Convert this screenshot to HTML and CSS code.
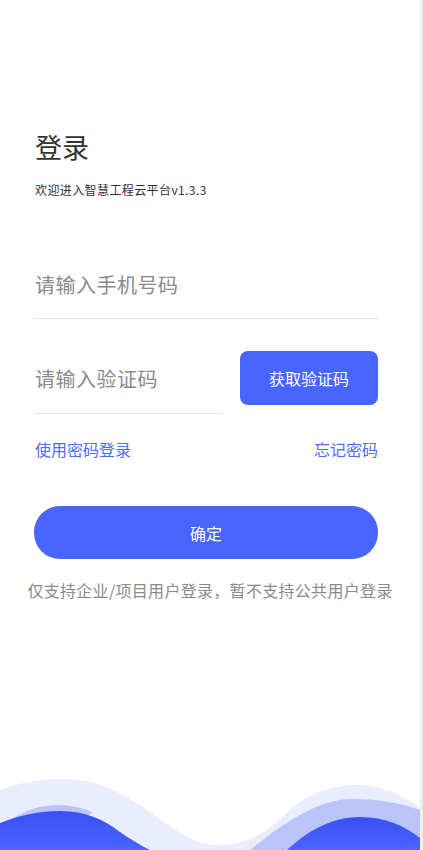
FILE: index.html
```html
<!DOCTYPE html>
<html lang="zh-CN">
<head>
<meta charset="utf-8">
<title>登录</title>
<link rel="stylesheet" href="styles.css">
</head>
<body>
<div class="page">
  <h1 class="title">登录</h1>
  <p class="subtitle">欢迎进入智慧工程云平台v1.3.3</p>

  <div class="field field-phone">
    <input class="input" type="text" placeholder="请输入手机号码">
  </div>

  <div class="code-row">
    <div class="field field-code">
      <input class="input" type="text" placeholder="请输入验证码">
    </div>
    <button class="code-btn" type="button">获取验证码</button>
  </div>

  <div class="links">
    <a class="link">使用密码登录</a>
    <a class="link">忘记密码</a>
  </div>

  <button class="submit" type="button">确定</button>

  <p class="notice">仅支持企业/项目用户登录，暂不支持公共用户登录</p>

  <div class="waves">
    <svg width="420" height="75" viewBox="0 775 420 75" xmlns="http://www.w3.org/2000/svg">
      <defs>
        <linearGradient id="dk" x1="0" y1="0" x2="0" y2="1">
          <stop offset="0" stop-color="#3a50f2"/>
          <stop offset="1" stop-color="#4a64ff"/>
        </linearGradient>
      </defs>
      <path fill="#e9edfd" d="M0,790 C20,782 45,779 63,779 C95,779 115,790 140,805 C170,825 190,845 217,845 C245,845 265,835 290,810 C310,792 335,785 357,785 C385,785 405,797 420,808 L420,850 L0,850 Z"/>
      <path fill="#b9c4fb" d="M10,820 C25,810 42,805 57,805 C72,805 82,808 92,812 L60,850 L10,850 Z"/>
      <path fill="#b9c4fb" d="M250,850 C265,838 280,826 300,815 C318,805 335,799 352,799 C380,799 400,803 420,810 L420,850 Z"/>
      <path fill="url(#dk)" d="M0,823 C20,815 40,811 60,811 C85,811 105,820 120,832 C132,840 142,846 150,850 L0,850 Z"/>
      <path fill="url(#dk)" d="M287,850 C305,833 330,817 360,817 C385,817 405,826 420,838 L420,850 Z"/>
    </svg>
  </div>
</div>
</body>
</html>
```
FILE: styles.css
```css
html {
  background: #efefef;
}
body {
  margin: 0;
  font-family: "Noto Sans CJK SC", "Noto Sans", sans-serif;
}
.page {
  width: 420px;
  min-height: 850px;
  box-sizing: border-box;
  background: #ffffff;
  padding: 0 42px 0 34px;
  display: flex;
  flex-direction: column;
  overflow: hidden;
}
.title {
  margin: 129px 0 0 1px;
  font-size: 27px;
  line-height: 36px;
  font-weight: 400;
  color: #333333;
}
.subtitle {
  margin: 16px 0 0 1px;
  font-size: 12px;
  line-height: 18px;
  letter-spacing: 0.4px;
  color: #333333;
}
.field {
  border-bottom: 1px solid #e6e6e8;
  box-sizing: border-box;
}
.field-phone {
  margin-top: 54px;
  padding: 12px 0 13px;
}
.input {
  display: block;
  width: 100%;
  border: none;
  outline: none;
  padding: 0 0 0 1px;
  margin: 0;
  height: 40px;
  line-height: 40px;
  font-family: inherit;
  font-size: 20px;
  letter-spacing: 0.5px;
  color: #333333;
  background: transparent;
}
.input::placeholder {
  color: #8a8a8a;
}
.code-row {
  margin-top: 28px;
  display: flex;
  justify-content: space-between;
  align-items: flex-start;
}
.field-code {
  width: 189px;
  padding: 12px 0 14px;
}
.code-btn {
  margin-top: 4px;
  width: 138px;
  height: 54px;
  border: none;
  border-radius: 8px;
  background: #4865ff;
  color: #ffffff;
  font-family: inherit;
  font-size: 16px;
  padding: 0;
}
.links {
  margin-top: 23px;
  display: flex;
  justify-content: space-between;
  font-size: 16px;
  line-height: 24px;
}
.link {
  color: #4f6df5;
  padding-left: 1px;
}
.submit {
  margin-top: 45px;
  height: 53px;
  width: 100%;
  border: none;
  border-radius: 26px;
  background: #4865ff;
  color: #ffffff;
  font-family: inherit;
  font-size: 16px;
  padding: 0;
}
.notice {
  margin: 19px -42px 0 -34px;
  text-align: center;
  font-size: 16px;
  line-height: 24px;
  letter-spacing: 0.3px;
  color: #8a8a8a;
}
.waves {
  margin: auto -42px 0 -34px;
  height: 75px;
  line-height: 0;
}
.waves svg {
  display: block;
}
```
